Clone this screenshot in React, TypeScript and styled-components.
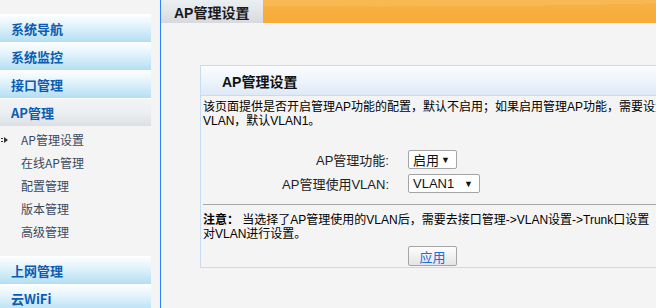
import React from 'react';
import styled, { createGlobalStyle } from 'styled-components';

const GlobalStyle = createGlobalStyle`
  html, body {
    margin: 0;
    padding: 0;
    background: #f4f4f4;
    overflow: hidden;
  }
  body {
    font-family: "Liberation Sans", "Noto Sans CJK SC", sans-serif;
    color: #111;
  }
`;

const navTop = ['系统导航', '系统监控', '接口管理'];
const subItems = ['AP管理设置', '在线AP管理', '配置管理', '版本管理', '高级管理'];
const navBottom = ['上网管理', '云WiFi'];

export default function App() {
  return (
    <>
      <GlobalStyle />
      <Page>
        <Sidebar>
          <TopStrip />
          {navTop.map((t) => (
            <NavHead key={t}>{t}</NavHead>
          ))}
          <NavHead $active>AP管理</NavHead>
          <SubList>
            {subItems.map((t, i) => (
              <SubItem key={t}>
                {i === 0 && (
                  <Marker width="7" height="6" viewBox="0 0 7 6">
                    <path d="M0 1h2v1H0zM0 4h2v1H0zM3 0l4 3-4 3z" fill="#333" />
                  </Marker>
                )}
                {t}
              </SubItem>
            ))}
          </SubList>
          {navBottom.map((t) => (
            <NavHead key={t}>{t}</NavHead>
          ))}
        </Sidebar>
        <Main>
          <TitleBar>
            <Tab>AP管理设置</Tab>
            <OrangeBar />
          </TitleBar>
          <Content>
            <Panel>
              <PanelHead>AP管理设置</PanelHead>
              <Desc>
                该页面提供是否开启管理AP功能的配置，默认不启用；如果启用管理AP功能，需要设置
                <br />
                VLAN，默认VLAN1。
              </Desc>
              <Form>
                <Label>AP管理功能:</Label>
                <Select $w={49}>
                  <span>启用</span>
                  <Arrow>▼</Arrow>
                </Select>
                <Label>AP管理使用VLAN:</Label>
                <Select $w={72}>
                  <span>VLAN1</span>
                  <Arrow>▼</Arrow>
                </Select>
              </Form>
              <Separator />
              <Note>
                <b>注意：</b> 当选择了AP管理使用的VLAN后，需要去接口管理-&gt;VLAN设置-&gt;Trunk口设置
                <br />
                对VLAN进行设置。
              </Note>
              <ButtonRow>
                <ApplyButton>应用</ApplyButton>
              </ButtonRow>
            </Panel>
          </Content>
        </Main>
      </Page>
    </>
  );
}

const Page = styled.div`
  display: flex;
  width: 656px;
  height: 308px;
  overflow: hidden;
`;

const Sidebar = styled.div`
  width: 151px;
  flex-shrink: 0;
  padding-top: 14px;
  display: flex;
  flex-direction: column;
`;

const TopStrip = styled.div`
  height: 2px;
  background: #c4dcef;
`;

const NavHead = styled.div<{ $active?: boolean }>`
  height: 28px;
  flex-shrink: 0;
  display: flex;
  align-items: center;
  padding-left: 11px;
  font-family: "Noto Sans CJK SC", sans-serif;
  font-size: 13px;
  font-weight: 700;
  color: #0b5cb2;
  background: ${(p) =>
    p.$active
      ? 'linear-gradient(#f2f4f6 0%, #eceff2 50%, #dcdfe3 100%)'
      : 'linear-gradient(#fbfeff 0%, #e6f5fc 35%, #b3def3 100%)'};
  border-top: 1px solid #fff;
  box-sizing: border-box;
`;

const SubList = styled.div`
  padding: 2px 0 13px;
`;

const SubItem = styled.div`
  position: relative;
  height: 23px;
  display: flex;
  align-items: center;
  padding-left: 21px;
  font-family: "Noto Sans CJK SC", sans-serif;
  font-size: 12px;
  color: #3a4960;
`;

const Marker = styled.svg`
  position: absolute;
  left: 1px;
  top: 9px;
`;

const Main = styled.div`
  flex: 1;
  margin-left: 9px;
  border-left: 1px solid #2a84ff;
  display: flex;
  flex-direction: column;
  overflow: hidden;
`;

const TitleBar = styled.div`
  display: flex;
  height: 23px;
  flex-shrink: 0;
`;

const Tab = styled.div`
  width: 102px;
  box-sizing: border-box;
  padding-left: 13px;
  display: flex;
  align-items: center;
  font-size: 14px;
  font-weight: 700;
  color: #1a1a1a;
  background: linear-gradient(#eceff2 0%, #e2e6e9 50%, #d6dadf 100%);
`;

const OrangeBar = styled.div`
  flex: 1;
  background:
    radial-gradient(140% 55% at 30% -5%, #f8b852 60%, transparent 61%),
    linear-gradient(#f7b247 0%, #f6ae3c 55%, #f6ac36 100%);
`;

const Content = styled.div`
  padding: 42px 0 0 39px;
`;

const Panel = styled.div`
  width: 520px;
  border: 1px solid #c6dcf2;
  border-right: none;
  padding-bottom: 1px;
`;

const PanelHead = styled.div`
  height: 29px;
  display: flex;
  align-items: center;
  padding-left: 21px;
  font-size: 14px;
  font-weight: 700;
  color: #111;
  background: linear-gradient(#fafcfe 0%, #eef4fb 50%, #dde9f7 100%);
  border-bottom: 1px solid #c6dcf2;
`;

const Desc = styled.div`
  padding: 4px 0 0 2px;
  font-size: 12px;
  line-height: 14px;
  white-space: nowrap;
  color: #000;
`;

const Form = styled.div`
  display: grid;
  grid-template-columns: 188px auto;
  column-gap: 19px;
  row-gap: 5px;
  margin-top: 22px;
  justify-items: start;
  align-items: center;
`;

const Label = styled.div`
  justify-self: end;
  font-size: 13px;
  color: #222;
`;

const Select = styled.div<{ $w: number }>`
  width: ${(p) => p.$w}px;
  height: 19px;
  box-sizing: border-box;
  border: 1px solid #a5a5a5;
  border-radius: 2px;
  background: #fff;
  display: flex;
  align-items: center;
  justify-content: space-between;
  padding: 0 6px 0 4px;
  font-size: 13px;
  color: #111;
`;

const Arrow = styled.span`
  font-size: 9px;
  color: #111;
`;

const Separator = styled.div`
  margin: 11px 0 0 2px;
  border-top: 1px solid #a8a8a8;
`;

const Note = styled.div`
  padding: 8px 0 0 2px;
  font-size: 12px;
  line-height: 14px;
  white-space: nowrap;
  color: #000;

  b {
    font-weight: 700;
  }
`;

const ButtonRow = styled.div`
  padding: 5px 0 0 207px;
`;

const ApplyButton = styled.button`
  width: 49px;
  height: 20px;
  padding: 0;
  border: 1px solid #a5a5a5;
  border-radius: 2px;
  background: linear-gradient(#fdfdfd, #e4e4e4);
  font-family: "Noto Sans CJK SC", sans-serif;
  font-size: 13px;
  color: #1a6fd8;
  cursor: pointer;
`;
